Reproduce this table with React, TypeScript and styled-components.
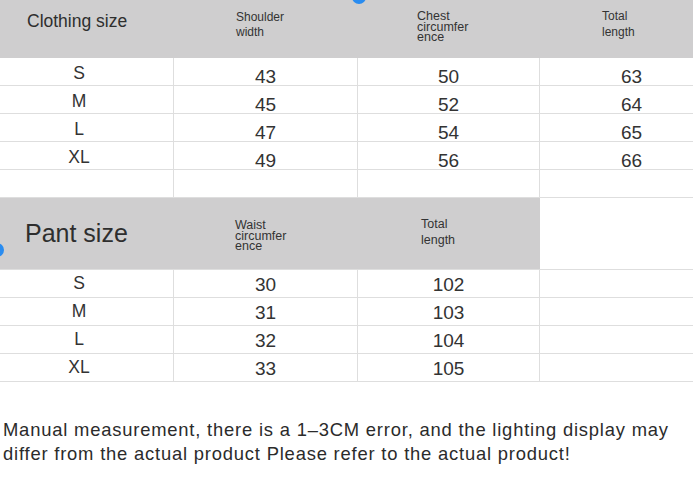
import React from "react";
import styled, { createGlobalStyle } from "styled-components";

const Global = createGlobalStyle`
  html, body { margin: 0; padding: 0; background: #ffffff; }
  body { font-family: "Liberation Sans", Arial, sans-serif; color: #333; }
`;

const Page = styled.div`
  position: relative;
  width: 693px;
  height: 495px;
  overflow: hidden;
  background: #fff;
`;

const Sheet = styled.div`
  width: 732px;
  margin-left: -9px;
`;

const COLS = "183px 184px 182px 183px";

const HeadRow = styled.div<{ $h: number; $line?: boolean }>`
  display: grid;
  grid-template-columns: ${COLS};
  height: ${(p) => p.$h}px;
  border-bottom: ${(p) => (p.$line ? "1px solid #dedede" : "none")};
  box-sizing: border-box;
`;

const HeadCell = styled.div<{ $gray?: boolean; $pt: number; $pl: number }>`
  background: ${(p) => (p.$gray ? "#cfcecf" : "#fff")};
  padding: ${(p) => p.$pt}px 0 0 ${(p) => p.$pl}px;
  box-sizing: border-box;
`;

const BigLabel = styled.div<{ $size: number }>`
  font-size: ${(p) => p.$size}px;
  line-height: ${(p) => p.$size + 4}px;
  color: #2e2e2e;
  display: inline-block;
`;

const SmallLabel = styled.div<{ $lh: number; $size: number }>`
  font-size: ${(p) => p.$size}px;
  line-height: ${(p) => p.$lh}px;
  color: #333;
  display: inline-block;
  white-space: pre;
`;

const Row = styled.div`
  display: grid;
  grid-template-columns: ${COLS};
  height: 28px;
  border-bottom: 1px solid #dedede;
  box-sizing: border-box;
`;

const Cell = styled.div<{ $shift?: number; $size?: number }>`
  display: flex;
  align-items: center;
  justify-content: center;
  border-right: 1px solid #dedede;
  font-size: ${(p) => p.$size ?? 19}px;
  color: #333;
  padding-top: ${(p) => (p.$shift ?? 0) * 2}px;
  box-sizing: border-box;
  &:last-child { border-right: none; }
`;

const SizeCell = styled(Cell)`
  padding-left: 4px;
  padding-right: 10px;
`;

const Note = styled.p`
  margin: 36px 0 0 3px;
  font-size: 18.4px;
  line-height: 23.5px;
  letter-spacing: 0.8px;
  color: #2b2b2b;
  width: 690px;
`;

const Dot = styled.div<{ $x: number; $y: number }>`
  position: absolute;
  left: ${(p) => p.$x - 7}px;
  top: ${(p) => p.$y - 7}px;
  width: 14px;
  height: 14px;
  border-radius: 50%;
  background: #2a8cf0;
`;

const top = [
  ["S", "43", "50", "63"],
  ["M", "45", "52", "64"],
  ["L", "47", "54", "65"],
  ["XL", "49", "56", "66"],
];
const pant = [
  ["S", "30", "102"],
  ["M", "31", "103"],
  ["L", "32", "104"],
  ["XL", "33", "105"],
];

export default function App() {
  return (
    <>
      <Global />
      <Page>
        <Sheet>
          <HeadRow $h={58}>
            <HeadCell $gray $pt={11} $pl={36}>
              <BigLabel $size={17.5}>Clothing size</BigLabel>
            </HeadCell>
            <HeadCell $gray $pt={10} $pl={62}>
              <SmallLabel $size={12} $lh={15}>{"Shoulder\nwidth"}</SmallLabel>
            </HeadCell>
            <HeadCell $gray $pt={11} $pl={59}>
              <SmallLabel $size={12.5} $lh={10.5}>{"Chest\ncircumfer\nence"}</SmallLabel>
            </HeadCell>
            <HeadCell $gray $pt={8} $pl={62}>
              <SmallLabel $size={12} $lh={16}>{"Total\nlength"}</SmallLabel>
            </HeadCell>
          </HeadRow>
          {top.map((r) => (
            <Row key={r[0]}>
              <SizeCell $size={17.5}>{r[0]}</SizeCell>
              <Cell $shift={4}>{r[1]}</Cell>
              <Cell $shift={4}>{r[2]}</Cell>
              <Cell $shift={4}>{r[3]}</Cell>
            </Row>
          ))}
          <Row>
            <Cell />
            <Cell />
            <Cell />
            <Cell />
          </Row>
          <HeadRow $h={72} $line>
            <HeadCell $gray $pt={21} $pl={34}>
              <BigLabel $size={25}>Pant size</BigLabel>
            </HeadCell>
            <HeadCell $gray $pt={22} $pl={61}>
              <SmallLabel $size={12.5} $lh={10.5}>{"Waist\ncircumfer\nence"}</SmallLabel>
            </HeadCell>
            <HeadCell $gray $pt={18} $pl={63}>
              <SmallLabel $size={12.5} $lh={16}>{"Total\nlength"}</SmallLabel>
            </HeadCell>
            <HeadCell />
          </HeadRow>
          {pant.map((r) => (
            <Row key={r[0]}>
              <SizeCell $size={17.5}>{r[0]}</SizeCell>
              <Cell $shift={1}>{r[1]}</Cell>
              <Cell $shift={1}>{r[2]}</Cell>
              <Cell />
            </Row>
          ))}
        </Sheet>
        <Note>
          Manual measurement, there is a 1–3CM error, and the lighting display may differ from the actual product Please refer to the actual product!
        </Note>
        <Dot $x={359} $y={-3} />
        <Dot $x={-3} $y={250} />
        <Dot $x={-5} $y={-5} />
      </Page>
    </>
  );
}
